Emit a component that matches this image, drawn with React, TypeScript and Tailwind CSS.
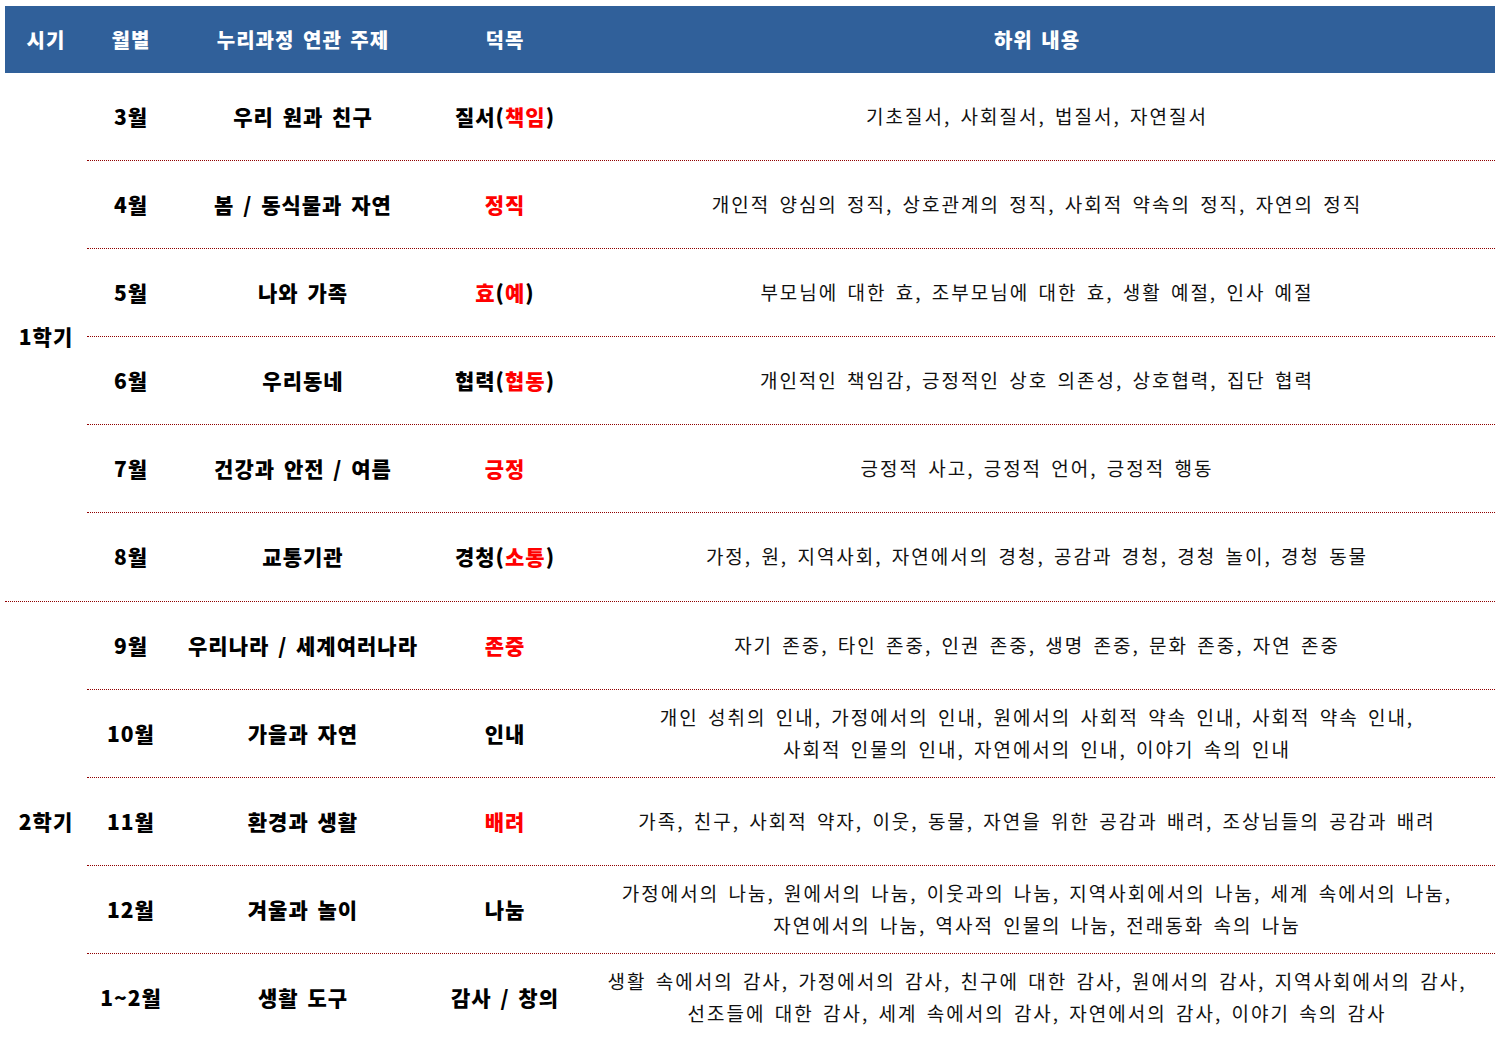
import React from 'react';

type Row = {
  month: string;
  theme: string;
  virtue: React.ReactNode;
  detail: string[];
};

const R = ({ children }: { children: React.ReactNode }) => <span className="text-[#ff0000]">{children}</span>;

const first: Row[] = [
  { month: '3월', theme: '우리 원과 친구', virtue: <>질서(<R>책임</R>)</>, detail: ['기초질서, 사회질서, 법질서, 자연질서'] },
  { month: '4월', theme: '봄 / 동식물과 자연', virtue: <R>정직</R>, detail: ['개인적 양심의 정직, 상호관계의 정직, 사회적 약속의 정직, 자연의 정직'] },
  { month: '5월', theme: '나와 가족', virtue: <><R>효</R>(<R>예</R>)</>, detail: ['부모님에 대한 효, 조부모님에 대한 효, 생활 예절, 인사 예절'] },
  { month: '6월', theme: '우리동네', virtue: <>협력(<R>협동</R>)</>, detail: ['개인적인 책임감, 긍정적인 상호 의존성, 상호협력, 집단 협력'] },
  { month: '7월', theme: '건강과 안전 / 여름', virtue: <R>긍정</R>, detail: ['긍정적 사고, 긍정적 언어, 긍정적 행동'] },
  { month: '8월', theme: '교통기관', virtue: <>경청(<R>소통</R>)</>, detail: ['가정, 원, 지역사회, 자연에서의 경청, 공감과 경청, 경청 놀이, 경청 동물'] },
];

const second: Row[] = [
  { month: '9월', theme: '우리나라 / 세계여러나라', virtue: <R>존중</R>, detail: ['자기 존중, 타인 존중, 인권 존중, 생명 존중, 문화 존중, 자연 존중'] },
  { month: '10월', theme: '가을과 자연', virtue: '인내', detail: ['개인 성취의 인내, 가정에서의 인내, 원에서의 사회적 약속 인내, 사회적 약속 인내,', '사회적 인물의 인내, 자연에서의 인내, 이야기 속의 인내'] },
  { month: '11월', theme: '환경과 생활', virtue: <R>배려</R>, detail: ['가족, 친구, 사회적 약자, 이웃, 동물, 자연을 위한 공감과 배려, 조상님들의 공감과 배려'] },
  { month: '12월', theme: '겨울과 놀이', virtue: '나눔', detail: ['가정에서의 나눔, 원에서의 나눔, 이웃과의 나눔, 지역사회에서의 나눔, 세계 속에서의 나눔,', '자연에서의 나눔, 역사적 인물의 나눔, 전래동화 속의 나눔'] },
  { month: '1~2월', theme: '생활 도구', virtue: '감사 / 창의', detail: ['생활 속에서의 감사, 가정에서의 감사, 친구에 대한 감사, 원에서의 감사, 지역사회에서의 감사,', '선조들에 대한 감사, 세계 속에서의 감사, 자연에서의 감사, 이야기 속의 감사'] },
];

const heavy = "font-['Noto_Sans_CJK_KR',sans-serif] font-black text-[21px] tracking-[1px] [word-spacing:3px] text-center";
const head = "font-['Noto_Sans_CJK_KR',sans-serif] font-black text-[20px] tracking-[1px] [word-spacing:3px] text-center";
const plain = "font-['Noto_Sans_CJK_KR',sans-serif] text-[19px] tracking-[2px] [word-spacing:3px] leading-[32px] text-center text-[#111] -mt-[2px]";
const dotted = 'border-b border-dotted border-[#900000]';
const cols = 'grid grid-cols-[88px_256px_148px_1fr] items-center';

function Block({ label, rows }: { label: string; rows: Row[] }) {
  return (
    <div className="flex">
      <div className={`w-[82px] flex items-center justify-center ${heavy} text-black`}>{label}</div>
      <div className="flex-1 flex flex-col">
        {rows.map((row, i) => (
          <div key={row.month} className={`${cols} h-[88px] ${i < rows.length - 1 ? dotted : ''}`}>
            <div className={`${heavy} text-black`}>{row.month}</div>
            <div className={`${heavy} text-black`}>{row.theme}</div>
            <div className={`${heavy} text-black`}>{row.virtue}</div>
            <div className={plain}>
              {row.detail.map((l, j) => (
                <div key={j}>{l}</div>
              ))}
            </div>
          </div>
        ))}
      </div>
    </div>
  );
}

export default function App() {
  return (
    <div className="w-[1502px] h-[1043px] bg-white pt-[6px] px-[5px]">
      <div className="w-[1490px]">
        <div className="flex h-[67px] items-center bg-[#30609a] text-white">
          <div className={`w-[82px] ${head}`}>시기</div>
          <div className={`flex-1 ${cols}`}>
            <div className={head}>월별</div>
            <div className={head}>누리과정 연관 주제</div>
            <div className={head}>덕목</div>
            <div className={head}>하위 내용</div>
          </div>
        </div>
        <div className={dotted}>
          <Block label="1학기" rows={first} />
        </div>
        <Block label="2학기" rows={second} />
      </div>
    </div>
  );
}
